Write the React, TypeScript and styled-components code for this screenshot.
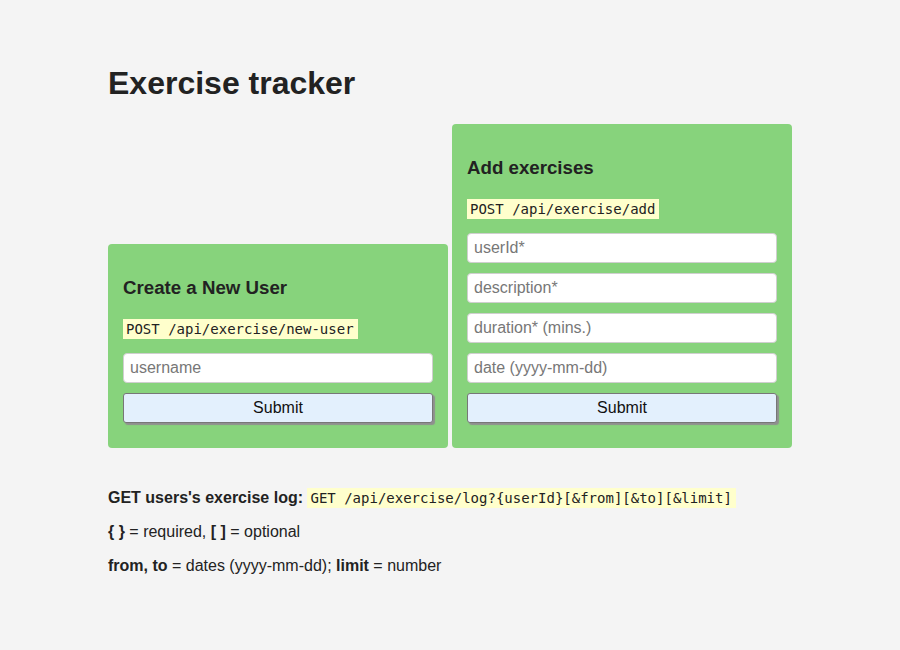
import styled, { createGlobalStyle } from "styled-components";

const GlobalStyle = createGlobalStyle`
  body {
    margin: 0;
    background-color: #f4f4f4;
    color: #222;
    font-family: "Liberation Sans", Arial, sans-serif;
  }
`;

const Container = styled.div`
  width: 684px;
  margin: 0 auto;
  padding-top: 65px;
`;

const Title = styled.h1`
  margin: 0 0 22px;
  font-size: 32px;
  line-height: 37px;
  font-weight: 700;
`;

const Forms = styled.div`
  display: flex;
  align-items: flex-end;
  gap: 4px;
`;

const Form = styled.form`
  width: 340px;
  box-sizing: border-box;
  padding: 33px 15px 25px;
  background-color: #87d37c;
  border-radius: 4px;
  display: flex;
  flex-direction: column;
`;

const FormTitle = styled.h3`
  margin: 0 0 19px;
  font-size: 18.7px;
  line-height: 22px;
  font-weight: 700;
`;

const Code = styled.code`
  font-family: "DejaVu Sans Mono", "Liberation Mono", monospace;
  font-size: 14px;
  line-height: 18px;
  padding: 2px 4px 2px 3px;
  background-color: #ffffcc;
  color: #222;
`;

const Endpoint = styled.div`
  height: 21px;
  margin-bottom: 14px;
  line-height: 21px;
`;

const Input = styled.input`
  box-sizing: border-box;
  height: 30px;
  width: 100%;
  margin: 0 0 10px;
  padding: 0 6px;
  border: 1px solid #cfcfcf;
  border-radius: 4px;
  background: #fff;
  font-family: "Liberation Sans", Arial, sans-serif;
  font-size: 16px;
  color: #222;

  &::placeholder {
    color: #777;
  }
`;

const Button = styled.button`
  box-sizing: border-box;
  height: 30px;
  width: 100%;
  border: 1px solid #777;
  border-radius: 3px;
  background-color: #e3f0fd;
  box-shadow: 2px 2px 1px #8f8f8f;
  font-family: "Liberation Sans", Arial, sans-serif;
  font-size: 16px;
  color: #111;
`;

const Notes = styled.div`
  padding-top: 25px;
`;

const Note = styled.p`
  margin: 16px 0;
  font-size: 16px;
  line-height: 18px;
`;

function App() {
  return (
    <>
      <GlobalStyle />
      <Container>
        <Title>Exercise tracker</Title>
        <Forms>
          <Form>
            <FormTitle>Create a New User</FormTitle>
            <Endpoint>
              <Code>POST /api/exercise/new-user</Code>
            </Endpoint>
            <Input placeholder="username" />
            <Button type="button">Submit</Button>
          </Form>
          <Form>
            <FormTitle>Add exercises</FormTitle>
            <Endpoint>
              <Code>POST /api/exercise/add</Code>
            </Endpoint>
            <Input placeholder="userId*" />
            <Input placeholder="description*" />
            <Input placeholder="duration* (mins.)" />
            <Input placeholder="date (yyyy-mm-dd)" />
            <Button type="button">Submit</Button>
          </Form>
        </Forms>
        <Notes>
          <Note>
            <b>GET users's exercise log: </b>
            <Code>GET /api/exercise/log?&#123;userId&#125;[&amp;from][&amp;to][&amp;limit]</Code>
          </Note>
          <Note>
            <b>&#123; &#125;</b> = required, <b>[ ]</b> = optional
          </Note>
          <Note>
            <b>from, to</b> = dates (yyyy-mm-dd); <b>limit</b> = number
          </Note>
        </Notes>
      </Container>
    </>
  );
}

export default App;
